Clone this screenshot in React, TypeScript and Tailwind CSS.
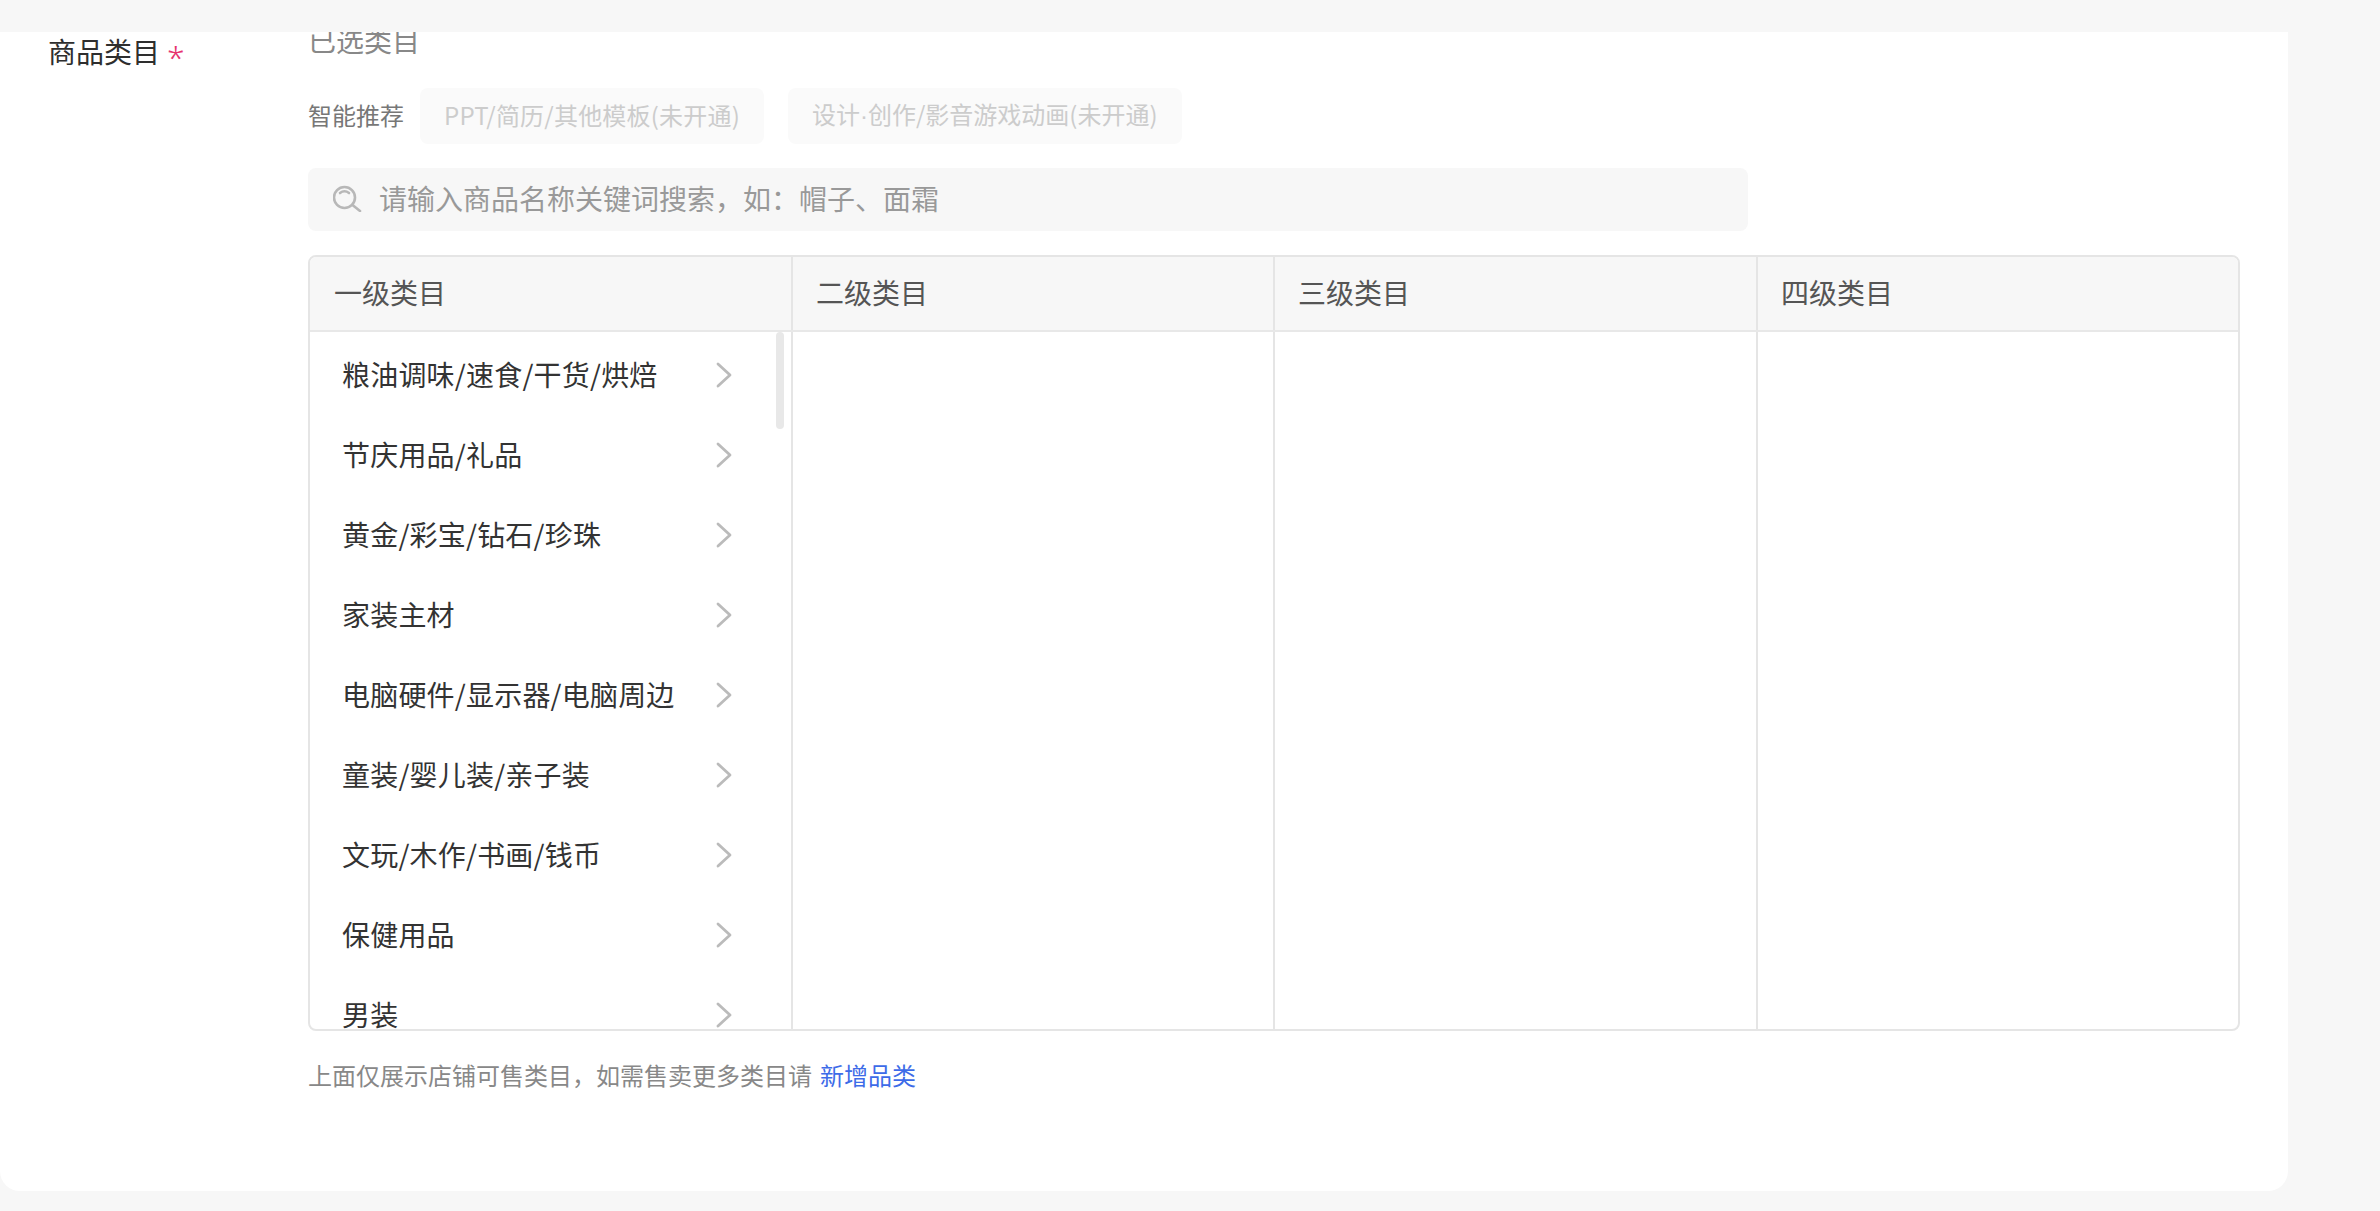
import React from 'react';

const categories = [
  '粮油调味/速食/干货/烘焙',
  '节庆用品/礼品',
  '黄金/彩宝/钻石/珍珠',
  '家装主材',
  '电脑硬件/显示器/电脑周边',
  '童装/婴儿装/亲子装',
  '文玩/木作/书画/钱币',
  '保健用品',
  '男装',
];

const levels = ['一级类目', '二级类目', '三级类目', '四级类目'];

const SearchIcon = () => (
  <svg width="30" height="28" viewBox="0 0 30 28" fill="none" stroke="#b8b8b8" strokeWidth="2.6" strokeLinecap="round" className="-mt-[3px] shrink-0">
    <circle cx="11.5" cy="13.5" r="10.5" />
    <path d="M7 9Q11.5 5.5 16 9" />
    <path d="M19.5 21l7.5 6" />
  </svg>
);

const Arrow = () => (
  <svg width="16" height="26" viewBox="0 0 16 26" fill="none" stroke="#bbb" strokeWidth="2.8" strokeLinecap="round" strokeLinejoin="round" className="shrink-0">
    <path d="M2 2l12 11L2 24" />
  </svg>
);

const App: React.FC = () => {
  return (
    <div className="h-[1211px] overflow-hidden bg-[#f7f7f7] pt-[32px] font-['Noto_Sans_CJK_SC',sans-serif]">
      <div className="flex h-[1159px] w-[2288px] overflow-hidden rounded-b-[20px] bg-white">
        {/* Label column */}
        <div className="flex w-[308px] shrink-0 items-start pl-[48px]">
          <span className="-mt-[1px] text-[28px] leading-[40px] text-[#2e2e2e]">商品类目</span>
          <span className="ml-[7px] mt-[3px] font-['Noto_Sans',sans-serif] text-[32px] font-light leading-[44px] text-[#e6336e]">*</span>
        </div>

        {/* Field column */}
        <div className="-mt-[12px] w-[1932px]">
          <div className="text-[28px] leading-[40px] text-[#888]">已选类目</div>

          <div className="mt-[28px] flex items-center">
            <span className="mr-[16px] pb-[2px] text-[24px] text-[#777]">智能推荐</span>
            <div className="flex gap-[24px]">
              <div className="flex h-[56px] items-center rounded-[8px] bg-[#fafafa] px-[24px] pb-[2px] text-[24px] tracking-[0.2px] text-[#ccc]">PPT/简历/其他模板(未开通)</div>
              <div className="flex h-[56px] items-center rounded-[8px] bg-[#fafafa] px-[24px] pb-[2px] text-[24px] text-[#ccc]">
                <span>设计<span className="font-['Liberation_Sans',sans-serif]">·</span>创作/影音游戏动画(未开通)</span>
              </div>
            </div>
          </div>

          <div className="mt-[24px] flex h-[63px] w-[1440px] items-center gap-[16px] rounded-[8px] bg-[#f7f7f7] pl-[25px]">
            <SearchIcon />
            <span className="pb-[3px] text-[28px] text-[#999]">{'请输入商品名称关键词搜索\uFF0C如\uFF1A帽子、面霜'}</span>
          </div>

          {/* Category picker */}
          <div className="mt-[24px] h-[776px] overflow-hidden rounded-[8px] border-2 border-[#e5e5e5]">
            <div className="grid h-[75px] grid-cols-[483px_482px_483px_1fr] border-b-2 border-[#e8e8e8] bg-[#f7f7f7]">
              {levels.map((level, i) => (
                <div key={level} className={`flex items-center pb-[3px] text-[28px] text-[#555] ${i === 0 ? 'pl-[24px]' : 'pl-[23px]'} ${i < 3 ? 'border-r-2 border-[#e5e5e5]' : ''}`}>
                  {level}
                </div>
              ))}
            </div>
            <div className="grid h-[697px] grid-cols-[483px_482px_483px_1fr]">
              <div className="relative overflow-hidden border-r-2 border-[#e5e5e5] pt-[3px]">
                {categories.map((name) => (
                  <div key={name} className="flex h-[80px] items-center justify-between pl-[32px] pr-[59px] text-[28px] tracking-[0.2px] text-[#333]">
                    <span className="pb-[2px]">{name}</span>
                    <Arrow />
                  </div>
                ))}
                {/* scrollbar thumb */}
                <div className="absolute right-[7px] top-[0px] h-[97px] w-[8px] rounded-full bg-[#e8e8e8]" />
              </div>
              <div className="border-r-2 border-[#e5e5e5]" />
              <div className="border-r-2 border-[#e5e5e5]" />
              <div />
            </div>
          </div>

          <div className="mt-[27px] text-[24px] leading-[34px] text-[#888]">
            {'上面仅展示店铺可售类目\uFF0C如需售卖更多类目请'}
            <a className="ml-[8px] text-[#3d6be8]">新增品类</a>
          </div>
        </div>
      </div>
    </div>
  );
};

export default App;
